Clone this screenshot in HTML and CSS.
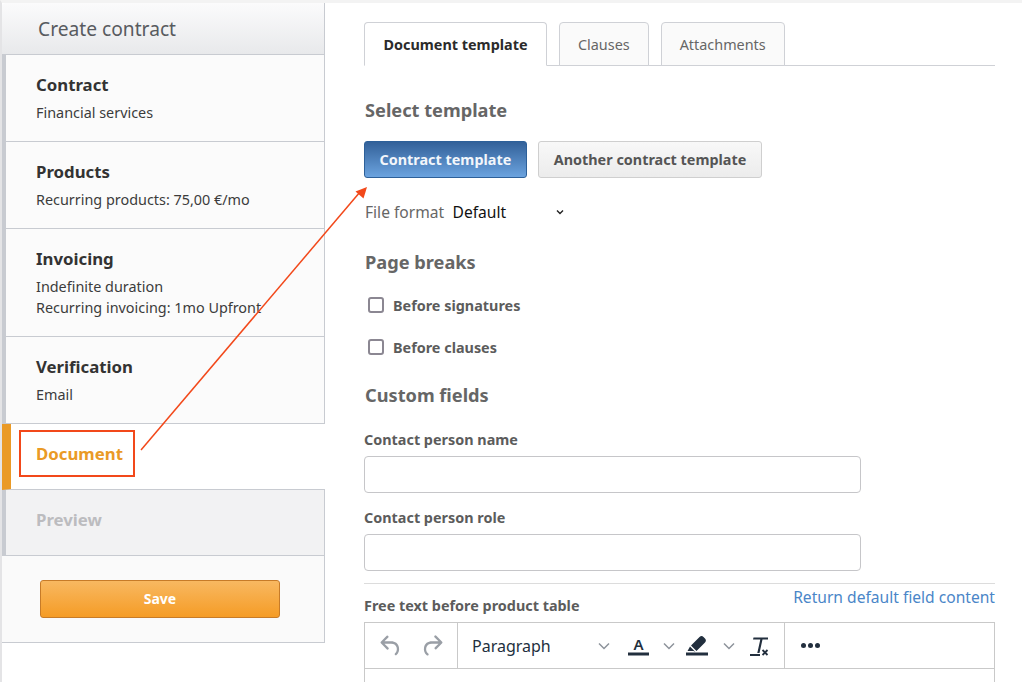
FILE: index.html
```html
<!DOCTYPE html>
<html lang="en">
<head>
<meta charset="utf-8">
<title>Create contract</title>
<link rel="stylesheet" href="styles.css">
</head>
<body>
<div class="page">
  <aside class="sidebar">
    <header class="side-head">Create contract</header>
    <section class="step step-done step-h1"><h3>Contract</h3><p>Financial services</p></section>
    <section class="step step-done step-h1"><h3>Products</h3><p>Recurring products: 75,00 €/mo</p></section>
    <section class="step step-done step-h2"><h3>Invoicing</h3><p>Indefinite duration</p><p>Recurring invoicing: 1mo Upfront</p></section>
    <section class="step step-done step-h1"><h3>Verification</h3><p>Email</p></section>
    <section class="step step-active"><h3>Document</h3></section>
    <section class="step step-disabled"><h3>Preview</h3></section>
    <footer class="side-foot"><button class="btn-save">Save</button></footer>
  </aside>
  <main class="main">
    <nav class="tabs">
      <div class="tab tab-active">Document template</div>
      <div class="tab">Clauses</div>
      <div class="tab">Attachments</div>
    </nav>
    <h2 class="heading heading-first">Select template</h2>
    <div class="templates">
      <button class="tpl tpl-primary">Contract template</button>
      <button class="tpl tpl-other">Another contract template</button>
    </div>
    <div class="format">
      <span class="format-label">File format</span>
      <span class="format-value">Default</span>
      <svg class="format-chev" width="8" height="6" viewBox="0 0 8 6"><path d="M1 1.5 4 4.5 7 1.5" fill="none" stroke="#222" stroke-width="1.4"/></svg>
    </div>
    <h2 class="heading heading-breaks">Page breaks</h2>
    <label class="check"><span class="box"></span>Before signatures</label>
    <label class="check"><span class="box"></span>Before clauses</label>
    <h2 class="heading heading-custom">Custom fields</h2>
    <div class="field-label field-label-first">Contact person name</div>
    <div class="input"></div>
    <div class="field-label">Contact person role</div>
    <div class="input"></div>
    <div class="free">
      <span class="free-label">Free text before product table</span>
      <a class="free-link">Return default field content</a>
    </div>
    <div class="editor">
      <div class="toolbar">
        <div class="group group-history">
          <svg width="28" height="28" viewBox="0 0 24 24"><path d="M6.400 8H12c3.700 0 6.200 2 6.800 5.100.6 2.700-.4 5.600-2.300 6.800a1 1 0 0 1-1-1.700c1.200-.8 1.700-2.800 1.400-4.700-.5-2.100-2.100-3.500-4.900-3.500H6.400l3.300 3.300a1 1 0 1 1-1.400 1.400l-5-5a1 1 0 0 1 0-1.400l5-5a1 1 0 0 1 1.400 1.400L6.400 8Z" fill="#9a9fa6"/></svg>
          <svg width="28" height="28" viewBox="0 0 24 24"><path d="M17.600 10H12c-2.800 0-4.400 1.400-4.900 3.500-.4 1.900.2 3.900 1.400 4.700a1 1 0 1 1-1 1.700c-1.900-1.200-2.900-4.100-2.300-6.800C5.800 10 8.300 8 12 8h5.600l-3.300-3.300a1 1 0 1 1 1.400-1.400l5 5a1 1 0 0 1 0 1.400l-5 5a1 1 0 0 1-1.400-1.400l3.300-3.300Z" fill="#9a9fa6"/></svg>
        </div>
        <div class="group group-format">
          <span class="para">Paragraph</span>
          <svg class="chev chev-para" width="14" height="10" viewBox="0 0 14 10"><path d="M2 2.500 7 7.500 12 2.500" fill="none" stroke="#8d939b" stroke-width="1.500"/></svg>
          <svg class="tool-a" width="24" height="24" viewBox="0 0 24 24"><rect x="2" y="18.500" width="21" height="3" fill="#222f3e"/><text x="12.500" y="15.500" class="tool-letter">A</text></svg>
          <svg class="chev chev-a" width="14" height="10" viewBox="0 0 14 10"><path d="M2 2.500 7 7.500 12 2.500" fill="none" stroke="#8d939b" stroke-width="1.500"/></svg>
          <svg class="tool-h" width="24" height="24" viewBox="0 0 24 24"><rect x="1" y="18.500" width="22" height="3" fill="#222f3e"/><path d="M6 11.500 14.500 3c1.400-1.200 2.800-1.200 4 0l1.500 1.500c1.200 1.300 1.200 2.700 0 4L11.500 17Z M5 12.500 10.500 18 8.500 17H2.500Z" fill="#222f3e"/></svg>
          <svg class="chev chev-h" width="14" height="10" viewBox="0 0 14 10"><path d="M2 2.500 7 7.500 12 2.500" fill="none" stroke="#8d939b" stroke-width="1.500"/></svg>
          <svg class="tool-t" width="24" height="24" viewBox="0 0 24 24"><path d="M6.500 3.500H21v2h-5.500L12.500 19h-2.200l3-13.500H6Z" fill="#222f3e"/><rect x="3" y="20" width="10" height="2" fill="#222f3e"/><path d="M15.500 16l5 5M20.500 16l-5 5" stroke="#222f3e" stroke-width="1.800"/></svg>
        </div>
        <div class="group group-more"><i></i><i></i><i></i></div>
      </div>
    </div>
  </main>
  <svg class="annotation" width="1022" height="682" viewBox="0 0 1022 682">
    <rect x="20" y="431" width="114" height="45" fill="none" stroke="#f2481a" stroke-width="2"/>
    <line x1="141" y1="450" x2="360" y2="192" stroke="#f2481a" stroke-width="1.500"/>
    <path d="M367 187 355.500 191.500 363.500 198.500Z" fill="#f2481a"/>
  </svg>
</div>
</body>
</html>
```

FILE: styles.css
```css
* { box-sizing: border-box; }
html, body { margin: 0; padding: 0; background: #fff; }
body { width: 1022px; height: 682px; overflow: hidden; font-family: "Noto Sans", sans-serif; color: #333; }
.page { position: relative; width: 1022px; height: 682px; overflow: hidden; display: flex; border-top: 3px solid #f3f3f3; border-left: 2px solid #e4e4e6; }
.sidebar { width: 323px; flex: none; display: flex; flex-direction: column; height: 640px; }
.side-head { height: 52px; padding: 12px 0 0 36px; font-size: 19.2px; line-height: 28px; color: #585b5f; background: linear-gradient(#fbfbfc, #e8e9eb); border-right: 1px solid #c8cbd1; border-bottom: 1px solid #c8cbd1; border-top-left-radius: 4px; }
.step { border-right: 1px solid #c8cbd1; border-bottom: 1px solid #c8cbd1; border-left: 4px solid #c8cbd1; background: #fbfbfb; padding: 19px 0 0 30px; }
.step-h1 { height: 87px; }
.step-h2 { height: 108px; }
.step h3 { margin: 0 0 6px; font-size: 16.8px; line-height: 22px; font-weight: 700; color: #333; }
.step p { margin: 0; font-size: 14.4px; line-height: 21px; color: #3c3c3c; }
.step-active { height: 66px; background: #fff; border-left: 9px solid #ea9a26; border-right: 0; padding: 19px 0 0 25px; }
.step-active h3 { color: #ea9a26; }
.step-disabled { height: 66px; background: #f2f2f3; padding: 19px 0 0 30px; }
.step-disabled h3 { color: #bcbcbf; }
.side-foot { height: 87px; background: #fafafa; border-right: 1px solid #c8cbd1; border-bottom: 1px solid #c8cbd1; padding: 24px 0 0 38px; }
.btn-save { display: block; width: 240px; height: 38px; padding: 0; border: 1px solid #c77b28; border-radius: 3px; background: linear-gradient(#f8b861, #f59c26); color: #fff; font: 700 14px/20px "Noto Sans", sans-serif; }
.main { margin-left: 39px; width: 631px; flex: none; padding-top: 19px; }
.tabs { display: flex; gap: 12px; height: 44px; border-bottom: 1px solid #cfd1d6; }
.tab { height: 44px; padding: 0 18px; border: 1px solid #cfd1d6; border-radius: 4px 4px 0 0; background: #fafafa; font-size: 14.4px; line-height: 43px; color: #666; }
.tab-active { padding: 0 18.500px; background: #fff; border-bottom-color: #fff; font-weight: 700; color: #2b2b2b; }
.heading { margin: 0; padding-left: 1px; font-size: 18.2px; line-height: 24px; font-weight: 700; color: #666; }
.heading-first { margin-top: 32px; }
.templates { display: flex; gap: 11px; margin-top: 19px; }
.tpl { height: 37px; padding: 0 14.500px; border: 1px solid #cfcfcf; border-radius: 3px; background: linear-gradient(#f8f8f8, #ececec); color: #555; font: 700 14.4px/20px "Noto Sans", sans-serif; }
.tpl-other { padding: 0 15px; }
.tpl-primary { border-color: #2d6099; background: linear-gradient(#336199, #6ba3df); color: #f2f6fb; }
.format { display: flex; align-items: center; margin-top: 23px; height: 22px; }
.format-label { font-size: 15.6px; color: #666; width: 88.5px; padding-left: 1px; }
.format-value { font-size: 15.6px; color: #111; width: 103px; }
.format-chev { display: block; }
.heading-breaks { margin-top: 27px; }
.check { display: flex; align-items: center; height: 22px; font-size: 14.4px; font-weight: 700; color: #5c5c5c; padding-left: 4px; margin-top: 20px; }
.box { width: 16px; height: 16px; border: 2px solid #8b8792; border-radius: 3px; margin-right: 9px; background: #fff; }
.heading-custom { margin-top: 25px; }
.field-label { font-size: 14.4px; line-height: 20px; font-weight: 700; color: #5c5c5c; margin-top: 15px; }
.field-label-first { margin-top: 23px; }
.input { width: 497px; height: 37px; margin-top: 6px; border: 1px solid #c6c6c9; border-radius: 4px; background: #fff; }
.free { position: relative; display: flex; justify-content: space-between; height: 39px; margin-top: 12px; border-top: 1px solid #dcdcdc; }
.free-label { font-size: 14.4px; line-height: 20px; font-weight: 700; color: #5c5c5c; margin-top: 12px; }
.free-link { font-size: 15.6px; line-height: 20px; color: #4a86c8; margin-top: 3px; }
.editor { height: 70px; border: 1px solid #c9c9c9; border-bottom: 0; }
.toolbar { display: flex; height: 46px; border-bottom: 1px solid #c9c9c9; }
.group { display: flex; align-items: center; height: 45px; border-right: 1px solid #c9c9c9; }
.group-history { width: 93px; gap: 13px; padding-left: 11.5px; flex: none; }
.group-format { width: 327px; flex: none; position: relative; }
.group-format svg { flex: none; }
.para { font-size: 16px; color: #222f3e; width: 131px; padding-left: 14px; flex: none; }
.chev-para { margin-left: 8px; }
.tool-a { margin-left: 15px; }
.chev-a { margin-left: 12px; }
.tool-h { margin-left: 9px; }
.chev-h { margin-left: 13px; }
.tool-t { margin-left: 11px; }
.tool-letter { font: 600 15px "Noto Sans", sans-serif; fill: #222f3e; text-anchor: middle; }
.group-more { border-right: 0; padding-left: 16px; gap: 2px; }
.group-more i { display: block; width: 5px; height: 5px; border-radius: 50%; background: #222f3e; }
.annotation { position: absolute; left: -2px; top: -3px; pointer-events: none; }
```
